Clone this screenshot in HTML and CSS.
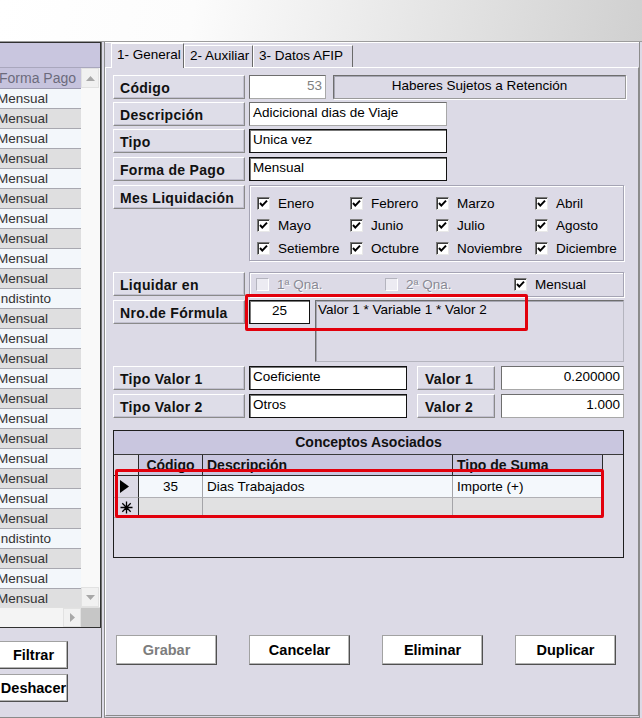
FILE: index.html
```html
<!DOCTYPE html>
<html lang="es">
<head>
<meta charset="utf-8">
<title>Conceptos</title>
<link rel="stylesheet" href="styles.css">
</head>
<body>
<div class="topbar"></div>
<div class="main">
  <aside class="left">
    <div class="lgrid">
      <div class="lcaption"></div>
      <div class="lbody">
        <div class="lcol">
          <div class="lhead">Forma Pago</div>
          <div class="lrows">
            <div class="lrow">Mensual</div>
            <div class="lrow">Mensual</div>
            <div class="lrow">Mensual</div>
            <div class="lrow">Mensual</div>
            <div class="lrow">Mensual</div>
            <div class="lrow">Mensual</div>
            <div class="lrow">Mensual</div>
            <div class="lrow">Mensual</div>
            <div class="lrow">Mensual</div>
            <div class="lrow">Mensual</div>
            <div class="lrow">Indistinto</div>
            <div class="lrow">Mensual</div>
            <div class="lrow">Mensual</div>
            <div class="lrow">Mensual</div>
            <div class="lrow">Mensual</div>
            <div class="lrow">Mensual</div>
            <div class="lrow">Mensual</div>
            <div class="lrow">Mensual</div>
            <div class="lrow">Mensual</div>
            <div class="lrow">Mensual</div>
            <div class="lrow">Mensual</div>
            <div class="lrow">Mensual</div>
            <div class="lrow">Indistinto</div>
            <div class="lrow">Mensual</div>
            <div class="lrow">Mensual</div>
            <div class="lrow">Mensual</div>
          </div>
        </div>
        <div class="vscroll">
          <div class="sbtn"><svg width="9" height="5" viewBox="0 0 9 5"><path d="M0 5 L4.5 0 L9 5 Z" fill="#a8a8a8"/></svg></div>
          <div class="strack"></div>
          <div class="sbtn"><svg width="9" height="5" viewBox="0 0 9 5"><path d="M0 0 L4.5 5 L9 0 Z" fill="#a8a8a8"/></svg></div>
        </div>
      </div>
      <div class="hbar">
        <div class="htrack"></div>
        <div class="sbtn hbtn"><svg width="5" height="9" viewBox="0 0 5 9"><path d="M0 0 L5 4.5 L0 9 Z" fill="#a8a8a8"/></svg></div>
        <div class="corner"></div>
      </div>
    </div>
    <div class="lbuttons">
      <button class="btn lbtn">Filtrar</button>
      <button class="btn lbtn">Deshacer</button>
    </div>
  </aside>

  <section class="right">
    <div class="tabs">
      <div class="tab active t1">1- General</div>
      <div class="tab t2">2- Auxiliar</div>
      <div class="tab t3">3- Datos AFIP</div>
    </div>
    <div class="page">
      <div class="row">
        <div class="lbl">Código</div>
        <div class="inp gray num w-code">53</div>
        <div class="inset-box">Haberes Sujetos a Retención</div>
      </div>
      <div class="row m3">
        <div class="lbl">Descripción</div>
        <div class="inp gray w-desc">Adicicional dias de Viaje</div>
      </div>
      <div class="row m3">
        <div class="lbl">Tipo</div>
        <div class="inp dark w-desc">Unica vez</div>
      </div>
      <div class="row m4">
        <div class="lbl">Forma de Pago</div>
        <div class="inp dark w-desc">Mensual</div>
      </div>
      <div class="row m4">
        <div class="lbl">Mes Liquidación</div>
        <div class="group months">
          <label class="chk"><span class="cb on"><svg width="11" height="11" viewBox="0 0 11 11"><path d="M2 5 L4.3 7.6 L9 2.6" fill="none" stroke="#000" stroke-width="2"/></svg></span>Enero</label>
          <label class="chk"><span class="cb on"><svg width="11" height="11" viewBox="0 0 11 11"><path d="M2 5 L4.3 7.6 L9 2.6" fill="none" stroke="#000" stroke-width="2"/></svg></span>Febrero</label>
          <label class="chk"><span class="cb on"><svg width="11" height="11" viewBox="0 0 11 11"><path d="M2 5 L4.3 7.6 L9 2.6" fill="none" stroke="#000" stroke-width="2"/></svg></span>Marzo</label>
          <label class="chk"><span class="cb on"><svg width="11" height="11" viewBox="0 0 11 11"><path d="M2 5 L4.3 7.6 L9 2.6" fill="none" stroke="#000" stroke-width="2"/></svg></span>Abril</label>
          <label class="chk"><span class="cb on"><svg width="11" height="11" viewBox="0 0 11 11"><path d="M2 5 L4.3 7.6 L9 2.6" fill="none" stroke="#000" stroke-width="2"/></svg></span>Mayo</label>
          <label class="chk"><span class="cb on"><svg width="11" height="11" viewBox="0 0 11 11"><path d="M2 5 L4.3 7.6 L9 2.6" fill="none" stroke="#000" stroke-width="2"/></svg></span>Junio</label>
          <label class="chk"><span class="cb on"><svg width="11" height="11" viewBox="0 0 11 11"><path d="M2 5 L4.3 7.6 L9 2.6" fill="none" stroke="#000" stroke-width="2"/></svg></span>Julio</label>
          <label class="chk"><span class="cb on"><svg width="11" height="11" viewBox="0 0 11 11"><path d="M2 5 L4.3 7.6 L9 2.6" fill="none" stroke="#000" stroke-width="2"/></svg></span>Agosto</label>
          <label class="chk"><span class="cb on"><svg width="11" height="11" viewBox="0 0 11 11"><path d="M2 5 L4.3 7.6 L9 2.6" fill="none" stroke="#000" stroke-width="2"/></svg></span>Setiembre</label>
          <label class="chk"><span class="cb on"><svg width="11" height="11" viewBox="0 0 11 11"><path d="M2 5 L4.3 7.6 L9 2.6" fill="none" stroke="#000" stroke-width="2"/></svg></span>Octubre</label>
          <label class="chk"><span class="cb on"><svg width="11" height="11" viewBox="0 0 11 11"><path d="M2 5 L4.3 7.6 L9 2.6" fill="none" stroke="#000" stroke-width="2"/></svg></span>Noviembre</label>
          <label class="chk"><span class="cb on"><svg width="11" height="11" viewBox="0 0 11 11"><path d="M2 5 L4.3 7.6 L9 2.6" fill="none" stroke="#000" stroke-width="2"/></svg></span>Diciembre</label>
        </div>
      </div>
      <div class="row m12">
        <div class="lbl">Liquidar en</div>
        <div class="group liq">
          <label class="chk disabled"><span class="cb off"></span>1ª Qna.</label>
          <label class="chk disabled"><span class="cb off"></span>2ª Qna.</label>
          <label class="chk"><span class="cb on"><svg width="11" height="11" viewBox="0 0 11 11"><path d="M2 5 L4.3 7.6 L9 2.6" fill="none" stroke="#000" stroke-width="2"/></svg></span>Mensual</label>
        </div>
      </div>
      <div class="row m3 formula-row">
        <div class="lbl">Nro.de Fórmula</div>
        <div class="inp dark center w-form">25</div>
        <div class="formula-text">Valor 1 * Variable 1 * Valor 2</div>
        <div class="red-mark mark-formula"></div>
      </div>
      <div class="row m4">
        <div class="lbl">Tipo Valor 1</div>
        <div class="inp dark w-tv">Coeficiente</div>
        <div class="lbl lbl-val">Valor 1</div>
        <div class="inp gray num w-val">0.200000</div>
      </div>
      <div class="row m4">
        <div class="lbl">Tipo Valor 2</div>
        <div class="inp dark w-tv">Otros</div>
        <div class="lbl lbl-val">Valor 2</div>
        <div class="inp gray num w-val">1.000</div>
      </div>

      <div class="cgrid">
        <div class="ctitle">Conceptos Asociados</div>
        <div class="crow chead">
          <div class="ci"></div>
          <div class="cc c-cod center">Código</div>
          <div class="cc c-desc">Descripción</div>
          <div class="cc c-tipo">Tipo de Suma</div>
        </div>
        <div class="crow cdata">
          <div class="ci"><svg width="9" height="13" viewBox="0 0 9 13"><path d="M0 0 L9 6.5 L0 13 Z" fill="#000"/></svg></div>
          <div class="cc c-cod center">35</div>
          <div class="cc c-desc">Dias Trabajados</div>
          <div class="cc c-tipo">Importe (+)</div>
        </div>
        <div class="crow cnew">
          <div class="ci"><svg width="13" height="13" viewBox="0 0 13 13"><path d="M6.5 0.5 V12.5 M0.5 6.5 H12.5 M2.3 2.3 L10.7 10.7 M10.7 2.3 L2.3 10.7" stroke="#000" stroke-width="1.3"/></svg></div>
          <div class="cc c-cod"></div>
          <div class="cc c-desc"></div>
          <div class="cc c-tipo"></div>
        </div>
        <div class="red-mark mark-grid"></div>
      </div>

      <div class="actions">
        <button class="btn act disabled">Grabar</button>
        <button class="btn act">Cancelar</button>
        <button class="btn act">Eliminar</button>
        <button class="btn act">Duplicar</button>
      </div>
    </div>
  </section>
</div>
</body>
</html>
```
FILE: styles.css
```css
* { box-sizing: border-box; margin: 0; padding: 0; }
html, body { width: 642px; height: 718px; overflow: hidden; }
body {
  background: #dcdae6;
  font-family: "Liberation Sans", Arial, sans-serif;
  font-size: 13.5px;
  letter-spacing: 0;
  color: #000;
}

.topbar {
  height: 42px;
  background: linear-gradient(100deg, #ffffff 0%, #fcfcfc 30%, #e8e8e8 62%, #d0d0d0 100%);
  border-bottom: 1px solid #9c9c9c;
}

.main { display: flex; height: 676px; }

/* ---------- left panel ---------- */
.left {
  width: 102px;
  flex: none;
  border-right: 1px solid #6e6e6e;
  border-bottom: 1px solid #8a8a8a;
  display: flex;
  flex-direction: column;
  overflow: hidden;
}
.lgrid {
  width: 101px;
  height: 586px;
  border-top: 1px solid #303030;
  border-right: 1px solid #303030;
  border-bottom: 1px solid #303030;
  display: flex;
  flex-direction: column;
  background: #f6f6f6;
}
.lcaption { height: 25px; flex: none; background: #c9c6df; border-bottom: 1px solid #a9a7bd; }
.lbody { height: 539px; flex: none; display: flex; overflow: hidden; }
.lcol { width: 81px; flex: none; display: flex; flex-direction: column; overflow: hidden; }
.lhead {
  height: 21px;
  flex: none;
  background: #c6c3dd;
  border-bottom: 1px solid #9c9ab0;
  font-size: 14px;
  color: #6c6b7c;
  line-height: 20px;
  text-indent: -1px;
  white-space: nowrap;
}
.lrows { display: flex; flex-direction: column; }
.lrow {
  height: 20px;
  flex: none;
  line-height: 19px;
  border-bottom: 1px solid #a8a8b0;
  background: #f3f7fb;
  color: #333;
  text-indent: -3px;
  white-space: nowrap;
}
.lrow:nth-child(even) { background: #dfdfe0; }

.vscroll { width: 19px; flex: none; display: flex; flex-direction: column; background: #f9f9f9; }
.sbtn {
  height: 20px;
  width: 18px;
  flex: none;
  display: flex;
  align-items: center;
  justify-content: center;
  background: #f1f1f1;
  border: 1px solid #e2e2e2;
}
.strack { flex: 1; }
.hbar { height: 20px; flex: none; display: flex; background: #f4f4f4; border-top: 1px solid #e0e0e0; }
.htrack { width: 63px; flex: none; }
.hbtn { width: 18px; height: 19px; }
.corner { width: 19px; flex: none; background: #c6c6c6; }

.lbuttons { display: flex; flex-direction: column; gap: 5px; margin-top: 13px; }
.lbtn { width: 69px; height: 28px; margin-left: -1px; }

/* ---------- buttons ---------- */
.btn {
  background: #fff;
  border: 1px solid;
  border-color: #a2a2a2 #505050 #505050 #a2a2a2;
  box-shadow: inset -1px -1px 0 #b4b4b4;
  font-family: "Liberation Sans", Arial, sans-serif;
  font-weight: bold;
  font-size: 14.5px;
  color: #000;
  text-align: center;
}
.btn.disabled { color: #7d7d7d; }

/* ---------- right panel ---------- */
.right {
  width: 536px;
  flex: none;
  margin-left: 2px;
  border-left: 1px solid #8c8c8c;
  border-right: 1px solid #8c8c8c;
  border-bottom: 1px solid #8a8a8a;
  display: flex;
  flex-direction: column;
}
.tabs {
  height: 25px;
  flex: none;
  display: flex;
  align-items: flex-end;
  padding-left: 6px;
  border-top: 1px solid #fff;
}
.tab {
  height: 22px;
  padding-left: 5px;
  line-height: 19px;
  border: 1px solid;
  border-bottom: none;
  border-color: #fff #6a6a6a #fff #fff;
  white-space: nowrap;
  position: relative;
}
.tab.active { height: 25px; margin-bottom: -1px; background: #dcdae6; z-index: 1; line-height: 20px; padding-top: 1px; }
.t1 { width: 73px; }
.t2 { width: 69px; }
.t3 { width: 100px; }

.page {
  flex: 1;
  border: 1px solid;
  border-color: #fff #8a8a8a #8a8a8a #fff;
  padding: 7px 0 0 7px;
  margin-bottom: 1px;
}

.row { display: flex; gap: 4px; align-items: flex-start; position: relative; }
.m3 { margin-top: 3px; }
.m4 { margin-top: 4px; }
.m12 { margin-top: 11px; }

.lbl {
  width: 132px;
  height: 24px;
  flex: none;
  border: 1px solid;
  border-color: #fff #8a8a8a #8a8a8a #fff;
  box-shadow: inset -1px -1px 0 #c2c0cf;
  padding: 3px 0 0 6px;
  background: #dedde8;
  font-weight: bold;
  font-size: 14px;
  letter-spacing: 0.3px;
  line-height: 18px;
  color: #111;
  white-space: nowrap;
}

.inp {
  height: 24px;
  flex: none;
  background: #fff;
  padding: 0 3px;
  line-height: 19px;
  white-space: nowrap;
  overflow: hidden;
}
.inp.gray { border: 1px solid; border-color: #6e6e6e #a8a8a8 #a8a8a8 #6e6e6e; }
.inp.dark { border: 1px solid #111; box-shadow: inset 1px 1px 0 #777; }
.inp.num { text-align: right; }
.inp.center, .center { text-align: center; }
.w-code { width: 77px; color: #808080; }
.w-desc { width: 198px; }
.w-form { width: 61px; }
.w-tv { width: 158px; }
.w-val { width: 123px; margin-left: 2px; }
.lbl-val { width: 78px; margin-left: 6px; padding-left: 7px; }

.inset-box {
  width: 293px;
  height: 24px;
  margin-left: 3px;
  border: 1px solid;
  border-color: #6e6e6e #9a9a9a #9a9a9a #6e6e6e;
  box-shadow: inset 1px 1px 0 #a6a6b2, 1px 1px 0 #fff;
  text-align: center;
  line-height: 19px;
  white-space: nowrap;
}

.group {
  width: 375px;
  border: 1px solid #a5a4b4;
  box-shadow: inset 1px 1px 0 #fff, 1px 1px 0 #fff;
}
.months {
  height: 76px;
  display: grid;
  grid-template-columns: 93px 86px 99px 1fr;
  grid-auto-rows: 22.5px;
  padding: 6px 0 0 7px;
}
.liq {
  height: 25px;
  display: grid;
  grid-template-columns: 129px 129px 1fr;
  padding: 0 0 0 6px;
  align-items: center;
}
.chk { display: flex; align-items: center; gap: 8px; white-space: nowrap; }
.cb {
  width: 13px;
  height: 13px;
  flex: none;
  border: 1px solid;
  border-color: #7a7a7a #e8e8e8 #e8e8e8 #7a7a7a;
  box-shadow: inset 1px 1px 0 #3a3a3a;
  background: #fff;
  display: flex;
}
.cb svg { display: block; }
.cb.off { background: #ecebf2; border-color: #b4b4be #fff #fff #b4b4be; box-shadow: none; }
.chk.disabled { color: #8a8a94; text-shadow: 1px 1px 0 #fff; }

.formula-text {
  width: 309px;
  height: 62px;
  margin-left: 1px;
  border: 1px solid;
  border-color: #6e6e6e #b4b4be #b4b4be #6e6e6e;
  box-shadow: inset 1px 1px 0 #a6a6b2;
  padding: 0 2px;
  line-height: 18px;
  white-space: nowrap;
}

.red-mark { position: absolute; border: 3px solid #e2000c; border-radius: 2px; pointer-events: none; }
.mark-formula { left: 132px; top: -6px; width: 283px; height: 37px; }

/* ---------- conceptos grid ---------- */
.cgrid {
  position: relative;
  width: 511px;
  height: 128px;
  margin-top: 12px;
  border: 1px solid #1e1e1e;
}
.ctitle {
  height: 24px;
  background: #c9c6df;
  border-bottom: 1px solid #3a3a3a;
  font-weight: bold;
  font-size: 14px;
  line-height: 22px;
  text-align: center;
  color: #111;
}
.crow { display: flex; }
.ci { width: 25px; flex: none; border-right: 1px solid #2a2a2a; display: flex; align-items: center; justify-content: center; }
.cc { flex: none; border-right: 1px solid #a4a4a8; padding-left: 4px; white-space: nowrap; overflow: hidden; }
.c-cod { width: 64px; padding-left: 0; }
.c-desc { width: 250px; }
.c-tipo { width: 150px; }
.chead { height: 21px; }
.chead .ci, .chead .cc {
  background: #c9c6df;
  border-right: 1px solid #2a2a2a;
  border-bottom: 1px solid #2a2a2a;
  font-weight: bold;
  font-size: 14px;
  line-height: 20px;
  color: #111;
}
.chead .ci { background: #dcdae6; }
.cdata { height: 22px; }
.cdata .cc { background: #f4f8fc; border-bottom: 1px solid #b0b0b4; line-height: 21px; }
.cdata .ci { border-bottom: 1px solid #b0b0b4; padding-right: 4px; }
.cnew { height: 20px; }
.cnew .cc { background: #e1e1e2; border-bottom: 1px solid #b0b0b4; }
.cnew .ci { border-bottom: 1px solid #b0b0b4; }
.mark-grid { left: 1px; top: 38px; width: 489px; height: 49px; }

/* ---------- bottom actions ---------- */
.actions { display: flex; gap: 32px; margin-top: 77px; padding-left: 3px; }
.act { width: 101px; height: 30px; }
```
